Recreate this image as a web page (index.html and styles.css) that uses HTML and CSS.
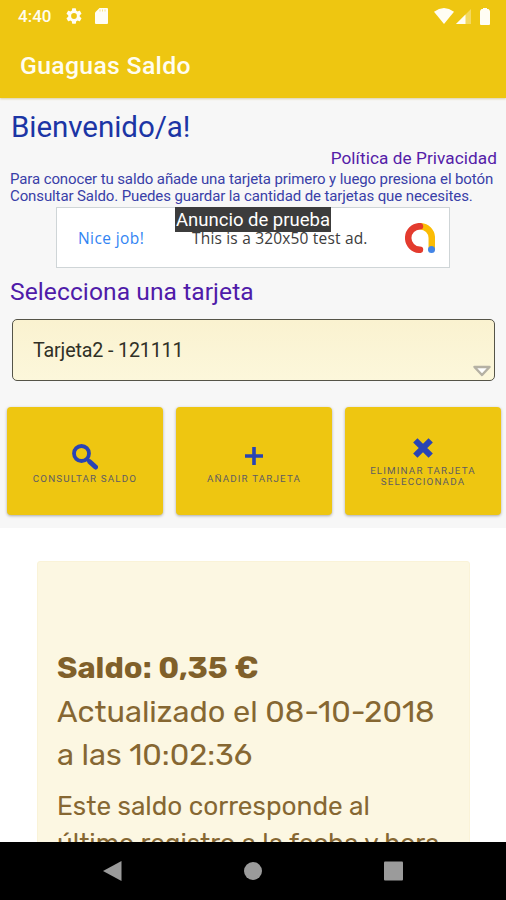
FILE: index.html
```html
<!DOCTYPE html>
<html lang="es">
<head>
<meta charset="utf-8">
<title>Guaguas Saldo</title>
<link rel="stylesheet" href="styles.css">
</head>
<body>
<header class="appbar">
  <div class="status">
    <span class="clock">4:40</span>
    <svg class="gear" viewBox="2 2 20 20"><path d="M19.14 12.94c.04-.3.06-.61.06-.94s-.02-.64-.07-.94l2.03-1.58a.5.5 0 0 0 .12-.61l-1.92-3.32a.5.5 0 0 0-.59-.22l-2.39.96c-.5-.38-1.03-.7-1.62-.94L14.4 2.81a.5.5 0 0 0-.48-.41h-3.84a.5.5 0 0 0-.47.41l-.36 2.54c-.59.24-1.13.57-1.62.94l-2.39-.96a.5.5 0 0 0-.59.22L2.74 8.87a.5.5 0 0 0 .12.61l2.03 1.58c-.05.3-.09.63-.09.94s.02.64.07.94l-2.03 1.58a.5.5 0 0 0-.12.61l1.92 3.32c.12.22.37.29.59.22l2.39-.96c.5.38 1.03.7 1.62.94l.36 2.54c.05.24.24.41.48.41h3.84c.24 0 .44-.17.47-.41l.36-2.54c.59-.24 1.13-.56 1.62-.94l2.39.96c.22.08.47 0 .59-.22l1.92-3.32a.5.5 0 0 0-.12-.61zM12 15.6A3.6 3.6 0 1 1 12 8.4a3.6 3.6 0 0 1 0 7.2z"/></svg>
    <svg class="sd" viewBox="0 0 13 16"><path d="M4.500 0H12a1 1 0 0 1 1 1v14a1 1 0 0 1-1 1H1a1 1 0 0 1-1-1V4.500z"/><path class="pins" d="M5 1.500v2M7.500 1.500v2M10 1.500v2"/></svg>
    <svg class="wifi" viewBox="0 0 20 16"><path d="M10 16 0 3.800Q10-3.600 20 3.800z"/></svg>
    <svg class="signal" viewBox="0 0 15 15"><path class="dim" d="M15 0v15H0z"/><path d="M9.500 5.500V15H0z"/></svg>
    <svg class="battery" viewBox="0 0 10 17"><path d="M3 0h4v1h1.500Q10 2 10 3.500V16a1 1 0 0 1-1 1H1a1 1 0 0 1-1-1V3.500Q0 2 1.500 1H3z"/></svg>
  </div>
  <h1 class="title">Guaguas Saldo</h1>
</header>
<main class="panel">
  <h2 class="welcome">Bienvenido/a!</h2>
  <a class="privacy">Política de Privacidad</a>
  <p class="intro">Para conocer tu saldo añade una tarjeta primero y luego presiona el botón<br>Consultar Saldo. Puedes guardar la cantidad de tarjetas que necesites.</p>
  <div class="ad">
    <span class="nice">Nice job!</span>
    <span class="adtext">This is a 320x50 test ad.</span>
    <svg class="admob" viewBox="0 0 30 30"><path class="yellow" d="M15 3.200A11.800 11.800 0 0 1 26.800 15v11"/><path class="red" d="M15 3.200a11.800 11.800 0 1 0 0 23.600"/><circle cx="26.500" cy="26.500" r="3.500"/></svg>
    <span class="badge">Anuncio de prueba</span>
  </div>
  <h3 class="choose">Selecciona una tarjeta</h3>
  <div class="select"><span>Tarjeta2 - 121111</span>
    <svg class="arrow" viewBox="0 0 20 14"><path d="M2.500 3h15L10 11z"/></svg>
  </div>
  <div class="buttons">
    <div class="btn">
      <svg class="search" viewBox="0 0 26 26"><circle cx="9.500" cy="9.500" r="7.500"/><path d="m15 15 2 2"/><path class="handle" d="m18 18 5.500 5"/></svg>
      <span>CONSULTAR SALDO</span>
    </div>
    <div class="btn">
      <svg class="plus" viewBox="0 0 20 20"><path d="M10 1v18M1 10h18"/></svg>
      <span>AÑADIR TARJETA</span>
    </div>
    <div class="btn two-line">
      <svg class="cross" viewBox="0 0 20 20"><path d="m3 3 14 14M17 3 3 17"/></svg>
      <span>ELIMINAR TARJETA<br>SELECCIONADA</span>
    </div>
  </div>
</main>
<section class="web">
  <div class="result">
    <p class="amount">Saldo: 0,35 €</p>
    <p class="updated">Actualizado el 08-10-2018<br>a las 10:02:36</p>
    <p class="note">Este saldo corresponde al<br>último registro a la fecha y hora</p>
  </div>
</section>
<nav class="nav">
  <svg viewBox="0 0 22 22"><path d="M19.500 1v20L1 11z"/></svg>
  <svg viewBox="0 0 22 22"><circle cx="11" cy="11" r="9"/></svg>
  <svg viewBox="0 0 22 22"><rect x="2" y="1.500" width="19" height="19" rx="1"/></svg>
</nav>
</body>
</html>
```

FILE: styles.css
```css
* { box-sizing: border-box; }
body { margin: 0; width: 506px; height: 900px; overflow: hidden; display: flex; flex-direction: column; background: #fff; font-family: Roboto, sans-serif; }
h1, h2, h3, p { margin: 0; font-weight: 400; white-space: nowrap; }
svg { display: block; flex: none; }

.appbar { height: 98px; flex: none; background: #eec611; color: #fffdf0; box-shadow: 0 1px 2px #d9cfa8; z-index: 1; }
.status { height: 32px; padding: 0 16px 0 18px; display: flex; align-items: center; fill: #fffdf4; }
.clock { width: 48px; font-size: 17px; font-weight: 500; }
.gear { width: 16px; height: 16px; }
.sd { width: 13px; height: 16px; margin-left: 13px; }
.pins { stroke: #eec611; stroke-width: .5; }
.wifi { width: 20px; height: 16px; margin-left: auto; }
.signal { width: 15px; height: 15px; margin: 1px 9px 0 2px; }
.dim { opacity: .35; }
.battery { width: 10px; height: 17px; }
.title { padding-left: 20px; font-size: 24.800px; font-weight: 550; line-height: 68px; letter-spacing: .3px; }

.panel { height: 430px; flex: none; display: flex; flex-direction: column; background: #f7f7f7; color: #1c35a5; }
.welcome { padding: 11px 0 0 11px; height: 50px; font-size: 29.500px; line-height: 36px; letter-spacing: -.05px; }
.privacy { align-self: flex-end; margin-right: 9px; height: 22px; font-size: 17.200px; line-height: 20px; letter-spacing: .07px; color: #5420a8; white-space: nowrap; }
.intro { height: 36px; padding-left: 10px; margin-top: 1px; font-size: 15px; line-height: 17px; letter-spacing: -.11px; color: #3940a8; }

.ad { position: relative; align-self: center; width: 394px; height: 61px; border: 1px solid #cfd5d7; background: #fff; display: flex; align-items: center; padding: 0 14px 0 21px; }
.nice { width: 114px; font-family: "Open Sans", sans-serif; font-size: 15.500px; letter-spacing: .4px; color: #3284f3; white-space: nowrap; }
.adtext { font-family: "Open Sans", sans-serif; font-size: 15.500px; letter-spacing: .18px; color: #3c3c3c; white-space: nowrap; }
.admob { width: 30px; height: 30px; margin-left: auto; fill: none; stroke-width: 6.500; stroke-linecap: round; }
.yellow { stroke: #fbbc04; }
.red { stroke: #e33b2e; }
.admob circle { fill: #4285e8; }
.badge { position: absolute; left: 118px; top: -1px; width: 156px; height: 25px; text-align: center; background: #3c3c3c; color: #fff; font-size: 18.500px; line-height: 26px; white-space: nowrap; }

.choose { height: 51px; padding-left: 10px; font-size: 24.600px; line-height: 47px; letter-spacing: .07px; color: #4f1ba9; }
.select { height: 62px; margin: 0 11px 0 12px; border: 1.500px solid #555448; border-radius: 5px; background: linear-gradient(#faf2d0, #fcf7db); display: flex; justify-content: space-between; align-items: center; padding: 0 2px 0 20px; font-size: 19.700px; letter-spacing: -.15px; color: #303026; }
.arrow { width: 20px; height: 14px; align-self: flex-end; margin-bottom: 2px; fill: #fff; stroke: #b5b1a4; stroke-width: 2.500; stroke-linejoin: round; }
.buttons { margin: 26px 5px 0 7px; height: 108px; display: grid; grid-template-columns: repeat(3, 156px); column-gap: 13px; }
.btn { border-radius: 4px; background: #eec611; box-shadow: 0 1px 3px #aaa; display: flex; flex-direction: column; align-items: center; justify-content: center; font-size: 9.800px; line-height: 11px; text-align: center; color: #5f5c62; fill: none; stroke: #2944b4; white-space: nowrap; padding-top: 5px; }
.btn span { letter-spacing: 1.150px; }
.two-line { padding-top: 2px; }
.search { width: 26px; height: 26px; margin-bottom: 3px; stroke-width: 3.800; }
.handle { stroke-width: 5; stroke-linecap: round; }
.plus { width: 20px; height: 20px; margin: 2px 0 7px; stroke-width: 3.600; }
.cross { width: 22px; height: 22px; margin-bottom: 6px; stroke-width: 5.500; }

.web { height: 314px; flex: none; overflow: hidden; padding: 33px 36px 0 37px; background: #fff; }
.result { height: 300px; border: 1px solid #faf3d8; border-radius: 3px; background: #fcf7e2; padding: 85px 19px 0; color: #80602a; font-family: Rubik, Roboto, sans-serif; }
.amount { font-size: 30.800px; line-height: 42px; height: 43px; font-weight: 700; }
.updated { font-size: 30.750px; line-height: 43px; color: #866732; }
.note { margin-top: 12px; font-size: 26.200px; line-height: 37px; color: #866732; }

.nav { height: 58px; flex: none; background: #000; display: flex; justify-content: center; align-items: center; gap: 118px; fill: #9b9b9b; }
.nav svg { width: 22px; height: 22px; }
```
